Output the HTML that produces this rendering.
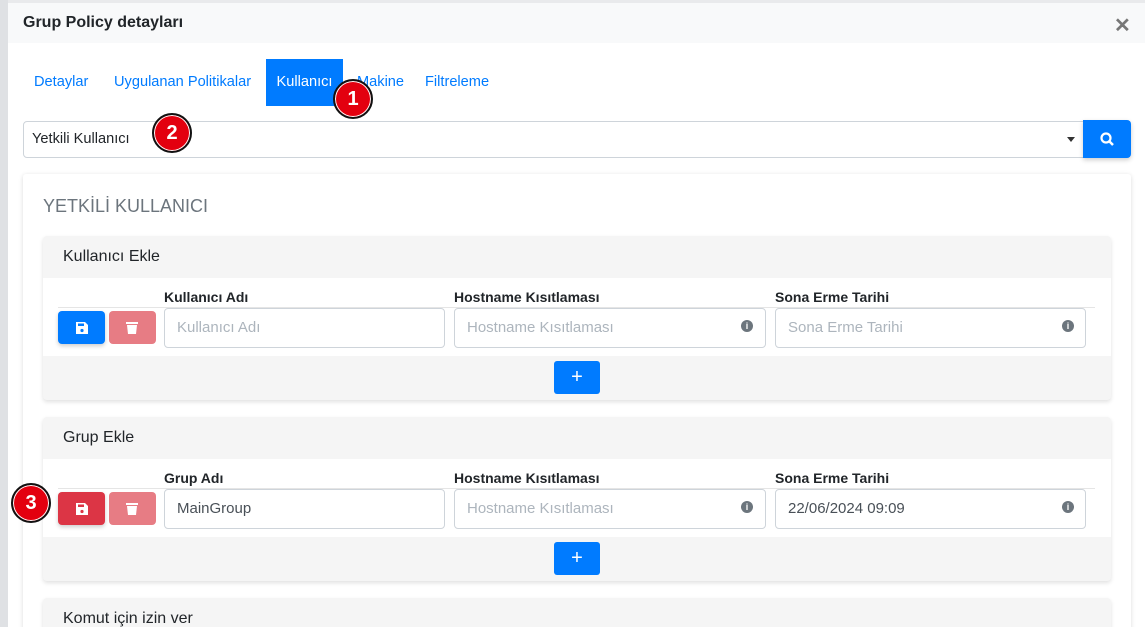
<!DOCTYPE html>
<html><head><meta charset="utf-8"><style>
*{box-sizing:border-box}
html,body{margin:0;width:1145px;height:627px;overflow:hidden}
body{background:#e9eaec;font-family:"Liberation Sans",sans-serif;position:relative}
.a{position:absolute}
.modal{left:8px;top:3px;width:1137px;height:624px;background:#fff}
.hdr{left:8px;top:3px;width:1137px;height:40px;background:#f8f9fa}
.tab{top:59px;height:47px;line-height:47px;font-size:14.6px;color:#007bff}
.card{background:#f5f5f5;border-radius:4px;box-shadow:0 2px 4px rgba(0,0,0,.12)}
.lbl{font-size:14px;font-weight:bold;color:#212529}
.inp{height:40px;border:1px solid #ced4da;border-radius:4px;background:#fff;font-size:15px;line-height:38px;padding-left:12px;color:#adb5bd}
.btn{width:47px;height:33px;border-radius:4px}
.info{width:12px;height:12px;border-radius:50%;background:#6c757d;color:#fff;font-size:9px;font-weight:bold;text-align:center;line-height:12px}
.badge{width:40px;height:40px;border-radius:50%;background:#e3000f;border:2px solid #111;box-shadow:0 0 0 1px #fff inset;color:#fff;font-weight:bold;font-size:20px;text-align:center;line-height:36px}
</style></head><body>
<div class="a" style="left:0;top:0;width:8px;height:627px;background:#dfe1e4"></div>
<div class="a modal"></div>
<div class="a hdr"></div>
<div class="a" style="left:23px;top:14px;font-size:16px;font-weight:bold;color:#212529">Grup Policy detayları</div>
<div class="a" style="left:1114px;top:13px;font-size:20px;font-weight:bold;color:#777">✕</div>
<div class="a tab" style="left:34px">Detaylar</div>
<div class="a tab" style="left:114px">Uygulanan Politikalar</div>
<div class="a tab" style="left:266px;width:77px;background:#007bff;color:#fff;text-align:center">Kullanıcı</div>
<div class="a tab" style="left:357px">Makine</div>
<div class="a tab" style="left:425px">Filtreleme</div>
<div class="a" style="left:23px;top:121px;width:1062px;height:37px;border:1px solid #ced4da;border-radius:4px 0 0 4px"></div>
<div class="a" style="left:32px;top:131px;font-size:14.6px;color:#212529">Yetkili Kullanıcı</div>
<div class="a" style="left:1067px;top:137px;border-left:4px solid transparent;border-right:4px solid transparent;border-top:5px solid #333"></div>
<div class="a" style="left:1083px;top:120px;width:48px;height:38px;background:#007bff;border-radius:0 4px 4px 0;box-shadow:0 2px 5px rgba(0,0,0,.2)">
<svg width="48" height="38"><circle cx="23" cy="18" r="4.5" fill="none" stroke="#fff" stroke-width="2.2"/><line x1="26.5" y1="21.5" x2="30" y2="25" stroke="#fff" stroke-width="2.5"/></svg></div>
<div class="a" style="left:23px;top:174px;width:1108px;height:460px;background:#fff;box-shadow:0 1px 5px rgba(0,0,0,.15);border-radius:3px"></div>
<div class="a" style="left:43px;top:196px;font-size:18px;color:#6c757d">YETKİLİ KULLANICI</div>

<div class="a card" style="left:43px;top:236px;width:1068px;height:164px"></div>
<div class="a" style="left:63px;top:248px;font-size:16px;color:#212529">Kullanıcı Ekle</div>
<div class="a" style="left:43px;top:278px;width:1068px;height:78px;background:#fff"></div>
<div class="a" style="left:58px;top:307px;width:1037px;height:1px;background:#e5e5e5"></div>
<div class="a lbl" style="left:164px;top:289px">Kullanıcı Adı</div>
<div class="a lbl" style="left:454px;top:289px">Hostname Kısıtlaması</div>
<div class="a lbl" style="left:775px;top:289px">Sona Erme Tarihi</div>
<div class="a btn" style="left:58px;top:311px;background:#007bff;box-shadow:0 2px 4px rgba(0,0,0,.2)"><svg width="47" height="33"><path d="M18 11h9l3 3v9H18z" fill="#fff"/><circle cx="24" cy="19.5" r="1.6" fill="#007bff"/><rect x="20" y="12.5" width="6" height="2.5" fill="#007bff"/></svg></div>
<div class="a btn" style="left:109px;top:311px;background:#e77c84"><svg width="46" height="33"><rect x="17" y="11" width="12" height="2" fill="#fff"/><path d="M18 14h10l-1 9h-8z" fill="#fff"/></svg></div>
<div class="a inp" style="left:164px;top:308px;width:281px">Kullanıcı Adı</div>
<div class="a inp" style="left:454px;top:308px;width:312px">Hostname Kısıtlaması</div>
<div class="a inp" style="left:775px;top:308px;width:311px">Sona Erme Tarihi</div>
<div class="a info" style="left:741px;top:320px">i</div>
<div class="a info" style="left:1062px;top:320px">i</div>
<div class="a" style="left:554px;top:361px;width:46px;height:33px;background:#007bff;border-radius:3px;color:#fff;text-align:center;font-size:20px;line-height:32px">+</div>

<div class="a card" style="left:43px;top:417px;width:1068px;height:164px"></div>
<div class="a" style="left:63px;top:429px;font-size:16px;color:#212529">Grup Ekle</div>
<div class="a" style="left:43px;top:459px;width:1068px;height:78px;background:#fff"></div>
<div class="a" style="left:58px;top:488px;width:1037px;height:1px;background:#e5e5e5"></div>
<div class="a lbl" style="left:164px;top:470px">Grup Adı</div>
<div class="a lbl" style="left:454px;top:470px">Hostname Kısıtlaması</div>
<div class="a lbl" style="left:775px;top:470px">Sona Erme Tarihi</div>
<div class="a btn" style="left:58px;top:492px;background:#dc3545;box-shadow:0 2px 4px rgba(0,0,0,.2)"><svg width="47" height="33"><path d="M18 11h9l3 3v9H18z" fill="#fff"/><circle cx="24" cy="19.5" r="1.6" fill="#dc3545"/><rect x="20" y="12.5" width="6" height="2.5" fill="#dc3545"/></svg></div>
<div class="a btn" style="left:109px;top:492px;background:#e77c84"><svg width="46" height="33"><rect x="17" y="11" width="12" height="2" fill="#fff"/><path d="M18 14h10l-1 9h-8z" fill="#fff"/></svg></div>
<div class="a inp" style="left:164px;top:489px;width:281px;color:#495057">MainGroup</div>
<div class="a inp" style="left:454px;top:489px;width:312px">Hostname Kısıtlaması</div>
<div class="a inp" style="left:775px;top:489px;width:311px;color:#495057">22/06/2024 09:09</div>
<div class="a info" style="left:741px;top:501px">i</div>
<div class="a info" style="left:1062px;top:501px">i</div>
<div class="a" style="left:554px;top:542px;width:46px;height:33px;background:#007bff;border-radius:3px;color:#fff;text-align:center;font-size:20px;line-height:32px">+</div>

<div class="a card" style="left:43px;top:598px;width:1068px;height:40px"></div>
<div class="a" style="left:63px;top:610px;font-size:16px;color:#212529">Komut için izin ver</div>

<div class="a badge" style="left:333px;top:79px">1</div>
<div class="a badge" style="left:152px;top:113px">2</div>
<div class="a badge" style="left:11px;top:483px">3</div>
</body></html>
